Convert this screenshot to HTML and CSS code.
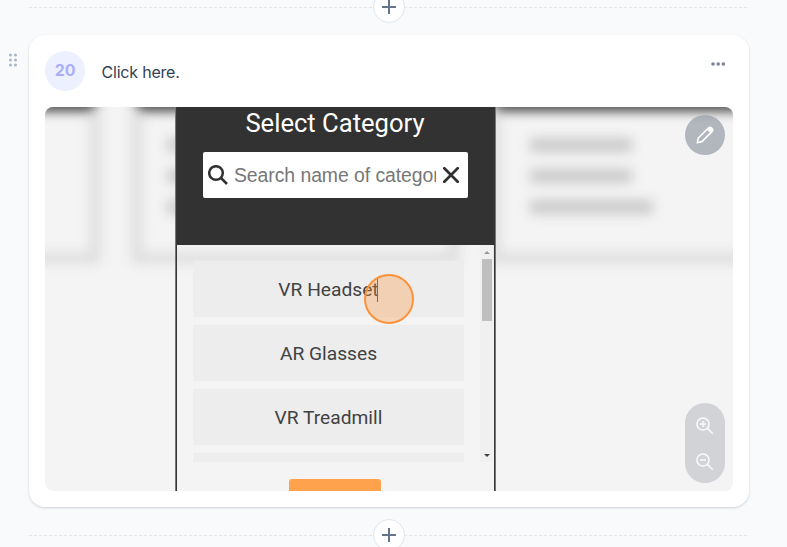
FILE: index.html
```html
<!DOCTYPE html>
<html lang="en">
<head>
<meta charset="utf-8">
<title>Guide step</title>
<link rel="stylesheet" href="styles.css">
</head>
<body>
<main class="page">
  <div class="divider divider-top"><button class="add" aria-label="Add step"><svg viewBox="0 0 14 14"><path d="M7 0v14M0 7h14"/></svg></button></div>
  <div class="step">
    <svg class="grip" viewBox="0 0 8 14"><circle cx="1.5" cy="2" r="1.5"/><circle cx="6.5" cy="2" r="1.5"/><circle cx="1.5" cy="7" r="1.5"/><circle cx="6.5" cy="7" r="1.5"/><circle cx="1.5" cy="12" r="1.5"/><circle cx="6.5" cy="12" r="1.5"/></svg>
    <section class="card">
      <header class="card-head">
        <span class="number">20</span>
        <p class="title">Click here.</p>
        <svg class="more" viewBox="0 0 14 4"><circle cx="2" cy="2" r="1.8"/><circle cx="7.2" cy="2" r="1.8"/><circle cx="12.3" cy="2" r="1.8"/></svg>
      </header>
      <div class="shot">
        <div class="backdrop">
          <div class="panel panel-a"></div>
          <div class="panel panel-b"><i></i><i></i><i></i></div>
          <div class="panel panel-c"><i></i><i></i><i></i></div>
        </div>
        <div class="dialog">
          <div class="dialog-head">
            <h2>Select Category</h2>
            <div class="search">
              <svg class="lens" viewBox="0 0 20 20"><circle cx="8" cy="8" r="6.8"/><path d="M13 13l6 6"/></svg>
              <span class="hint">Search name of category</span>
              <svg class="clear" viewBox="0 0 16 16"><path d="M1.3 1.3l13.4 13.4M14.7 1.3L1.3 14.7"/></svg>
            </div>
          </div>
          <div class="list">
            <div class="rows">
              <div class="row">VR Headset</div>
              <div class="row">AR Glasses</div>
              <div class="row">VR Treadmill</div>
              <div class="row"></div>
            </div>
            <div class="scrollbar">
              <svg viewBox="0 0 6 3"><path class="up" d="M0 3l3-3 3 3z"/></svg>
              <div class="thumb"></div>
              <svg viewBox="0 0 6 3"><path class="down" d="M0 0h6l-3 3z"/></svg>
            </div>
          </div>
          <div class="action"></div>
        </div>
        <div class="caret"></div>
        <div class="click"></div>
        <button class="edit" aria-label="Edit"><svg viewBox="0 0 18 18"><path class="body" d="M1.3 16.7l1-4.7L12.6 1.8q1.5-1.2 2.8.1l.8.8q1.2 1.3 0 2.7L5.9 15.6z"/><path class="cap" d="M10.7 3.7l2-2q1.4-1.2 2.8.1l.8.8q1.2 1.3 0 2.7l-1.5 1.6z"/></svg></button>
        <div class="zoom">
          <svg viewBox="0 0 18 18"><circle cx="7" cy="7" r="6.1"/><path d="M11.4 11.4l5.4 5.4M4 7h6M7 4v6"/></svg>
          <svg viewBox="0 0 18 18"><circle cx="7" cy="7" r="6.1"/><path d="M11.4 11.4l5.4 5.4M4 7h6"/></svg>
        </div>
      </div>
    </section>
  </div>
  <div class="divider divider-bottom"><button class="add" aria-label="Add step"><svg viewBox="0 0 14 14"><path d="M7 0v14M0 7h14"/></svg></button></div>
</main>
</body>
</html>
```
FILE: styles.css
```css
* { box-sizing: border-box; }
body { margin: 0; background: #f8fafc; overflow: hidden; font-family: Inter, sans-serif; }
svg { display: block; fill: none; }
button { padding: 0; border: 0; }
.page { width: 787px; height: 547px; overflow: hidden; }

.divider {
  height: 32px;
  width: 720px;
  margin-left: 29px;
  display: flex;
  justify-content: center;
  background: repeating-linear-gradient(90deg, #e2e6ea 0 3px, transparent 3px 5px) 0 16px / 100% 1px no-repeat;
}
.divider-top { margin-top: -9px; }
.divider-bottom { margin-top: 12px; }
.add {
  width: 32px;
  height: 32px;
  border: 1px solid #dfe6ef;
  border-radius: 50%;
  background: #fff;
  display: grid;
  place-items: center;
}
.add svg { width: 14px; height: 14px; stroke: #64748b; stroke-width: 2; }

.step { display: flex; margin-top: 12px; }
.grip { width: 8px; height: 14px; margin: 18px 12px 0 9px; fill: #a9b5c7; }
.card {
  width: 720px;
  height: 472px;
  padding: 16px;
  border-radius: 16px;
  background: #fff;
  box-shadow: 0 1px 3px rgba(15, 23, 42, .12), 0 1px 2px rgba(15, 23, 42, .06);
}
.card-head { height: 56px; display: flex; align-items: flex-start; }
.number {
  width: 40px;
  height: 40px;
  border-radius: 50%;
  background: #edf1ff;
  color: #abaefa;
  font: 700 16px/39px Inter, sans-serif;
  letter-spacing: -.3px;
  text-align: center;
}
.title { flex: 1; margin: 9px 0 0 16.5px; color: #334155; font-size: 16px; line-height: 24px; letter-spacing: -.2px; }
.more { width: 14px; height: 4px; margin: 11px 8px 0 0; fill: #7b8798; }

.shot {
  position: relative;
  width: 688px;
  height: 384px;
  border-radius: 8px;
  overflow: hidden;
  background: #f4f4f4;
  display: flex;
  justify-content: center;
}
.backdrop { position: absolute; inset: 0; }
.panel {
  position: absolute;
  top: -10px;
  height: 166px;
  border: 10px solid #dcdcdc;
  border-top: 14px solid #3c3c3c;
  filter: blur(6px);
}
.panel-a { left: -40px; width: 95px; }
.panel-b { left: 87px; width: 327px; padding: 27px 25px; }
.panel-c { left: 445px; width: 290px; padding: 27px 30px; }
.panel i { display: block; width: 102px; height: 14px; margin-bottom: 17px; background: #cacaca; }
.panel i:last-child { width: 123px; }

.dialog {
  position: relative;
  left: -53.5px;
  width: 319px;
  height: 384px;
  border: solid #363636;
  border-width: 0 1px;
  box-shadow: 0 0 0 1px #777;
}
.dialog-head { height: 138px; padding: 0 26px; background: #323232; }
.dialog h2 { margin: 0 0 0 -1px; height: 45px; font: 400 25.6px/33px Roboto, sans-serif; color: #fff; text-align: center; }
.search {
  height: 46px;
  padding: 0 8px 0 5px;
  display: flex;
  align-items: center;
  background: #fff;
  border-radius: 2px;
}
.search svg { flex: none; }
.lens { width: 20px; height: 20px; stroke: #303030; stroke-width: 2.5; }
.hint {
  width: 202px;
  margin: 0 7px 0 6px;
  overflow: hidden;
  white-space: nowrap;
  color: #777;
  font: 19.4px/26px "Liberation Sans", sans-serif;
  letter-spacing: -.06px;
}
.clear { width: 16px; height: 16px; stroke: #303030; stroke-width: 2.7; stroke-linecap: round; }
.list { height: 217px; display: flex; justify-content: space-between; padding-right: 1px; }
.rows { width: 271px; margin-left: 16px; padding-top: 16px; overflow: hidden; display: flex; flex-direction: column; gap: 8px; }
.row {
  flex: none;
  height: 56px;
  background: #ededed;
  box-shadow: 0 0 1px #e9e9e9;
  color: #424242;
  font: 19.2px/58px Roboto, sans-serif;
  text-align: center;
}
.scrollbar { width: 13px; padding: 6px 1px 5px; background: #f0f0f0; display: flex; flex-direction: column; align-items: center; }
.scrollbar svg { width: 6px; height: 3px; }
.thumb { width: 10px; height: 62px; margin: 5px 0 auto; background: #bfbfbf; }
.up { fill: #999; }
.down { fill: #404040; }
.action { width: 92px; height: 12px; margin: 17px 0 0 112px; background: #ffa24e; border-radius: 3px 3px 0 0; }

.caret { position: absolute; left: 332px; top: 172px; width: 1px; height: 23px; background: #555; }
.click {
  position: absolute;
  left: 319px;
  top: 167px;
  width: 50px;
  height: 50px;
  border: 2px solid #fb923c;
  border-radius: 50%;
  background: rgba(251, 146, 60, .32);
}
.edit {
  position: absolute;
  top: 8px;
  right: 8px;
  width: 40px;
  height: 40px;
  border-radius: 50%;
  background: rgba(150, 156, 166, .7);
  display: grid;
  place-items: center;
}
.edit svg { width: 18px; height: 18px; }
.body { stroke: #fff; stroke-width: 1.6; stroke-linejoin: round; }
.cap { fill: #fff; }
.zoom {
  position: absolute;
  right: 8px;
  bottom: 8px;
  width: 40px;
  height: 80px;
  padding-top: 1px;
  border-radius: 20px;
  background: #d1d3d7;
  display: flex;
  flex-direction: column;
  align-items: center;
  justify-content: center;
  gap: 18px;
}
.zoom svg { width: 18px; height: 18px; stroke: #fafafa; stroke-width: 1.5; }
```
